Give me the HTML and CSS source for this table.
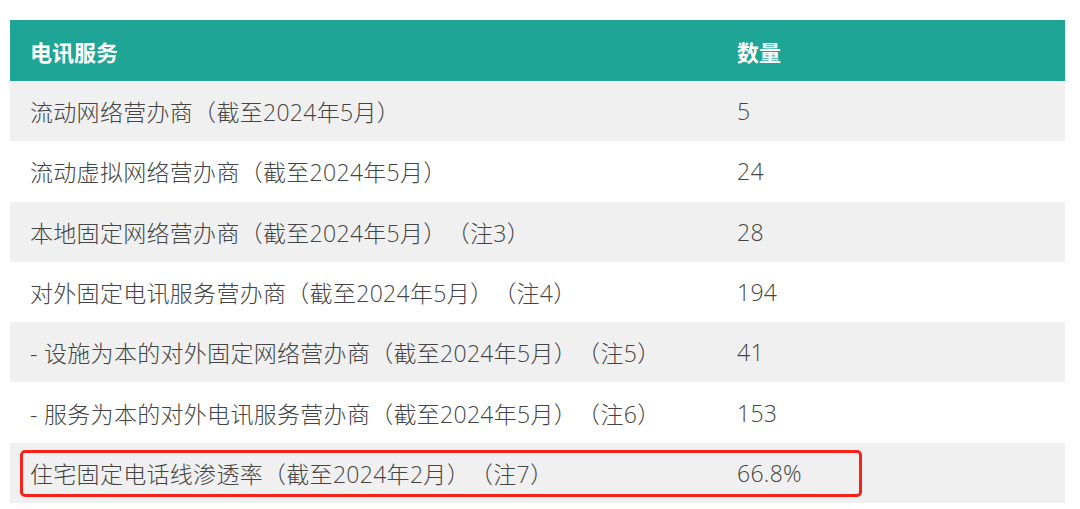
FILE: index.html
```html
<!DOCTYPE html>
<html lang="zh-CN">
<head>
    <meta charset="UTF-8">
    <title>电讯服务</title>
    <link rel="stylesheet" href="styles.css">
</head>
<body>

<div class="wrap">
    <table class="stats">
        <thead>
            <tr>
                <th class="col-name">电讯服务</th>
                <th>数量</th>
            </tr>
        </thead>
        <tbody>
            <tr><td>流动网络营办商（截至2024年5月）</td><td>5</td></tr>
            <tr><td>流动虚拟网络营办商（截至2024年5月）</td><td>24</td></tr>
            <tr><td>本地固定网络营办商（截至2024年5月）（注3）</td><td>28</td></tr>
            <tr><td>对外固定电讯服务营办商（截至2024年5月）（注4）</td><td>194</td></tr>
            <tr><td>- 设施为本的对外固定网络营办商（截至2024年5月）（注5）</td><td>41</td></tr>
            <tr><td>- 服务为本的对外电讯服务营办商（截至2024年5月）（注6）</td><td>153</td></tr>
            <tr><td>住宅固定电话线渗透率（截至2024年2月）（注7）</td><td>66.8%</td></tr>
        </tbody>
    </table>
    <!-- red marker drawn over the last row -->
    <div class="highlight"></div>
</div>

</body>
</html>
```

FILE: styles.css
```css
body {
    margin: 0;
    background: #ffffff;
    font-family: "Open Sans", "Noto Sans CJK SC", sans-serif;
}

.wrap {
    position: relative;
    width: 1055px;
    margin: 20px 0 0 10px;
}

.stats {
    width: 100%;
    border-collapse: collapse;
    table-layout: fixed;
}

.stats th,
.stats td {
    text-align: left;
    padding: 0 0 0 20px;
    white-space: nowrap;
    text-spacing-trim: space-all;
}

.stats th {
    background-color: #1ea595;
    color: #ffffff;
    font-size: 22px;
    font-weight: bold;
    height: 61px;
}

.stats .col-name {
    width: 687px;
}

.stats td {
    color: #444444;
    font-size: 23px;
    font-weight: 300;
    letter-spacing: 0.3px;
    height: 60.3px;
}

.stats tbody tr:nth-child(odd) {
    background-color: #f0f0f0;
}

.stats tbody tr:nth-child(even) {
    background-color: #ffffff;
}

.highlight {
    position: absolute;
    left: 10px;
    top: 430px;
    width: 836px;
    height: 41px;
    border: 3.5px solid #f7231a;
    border-radius: 5px;
}
```
